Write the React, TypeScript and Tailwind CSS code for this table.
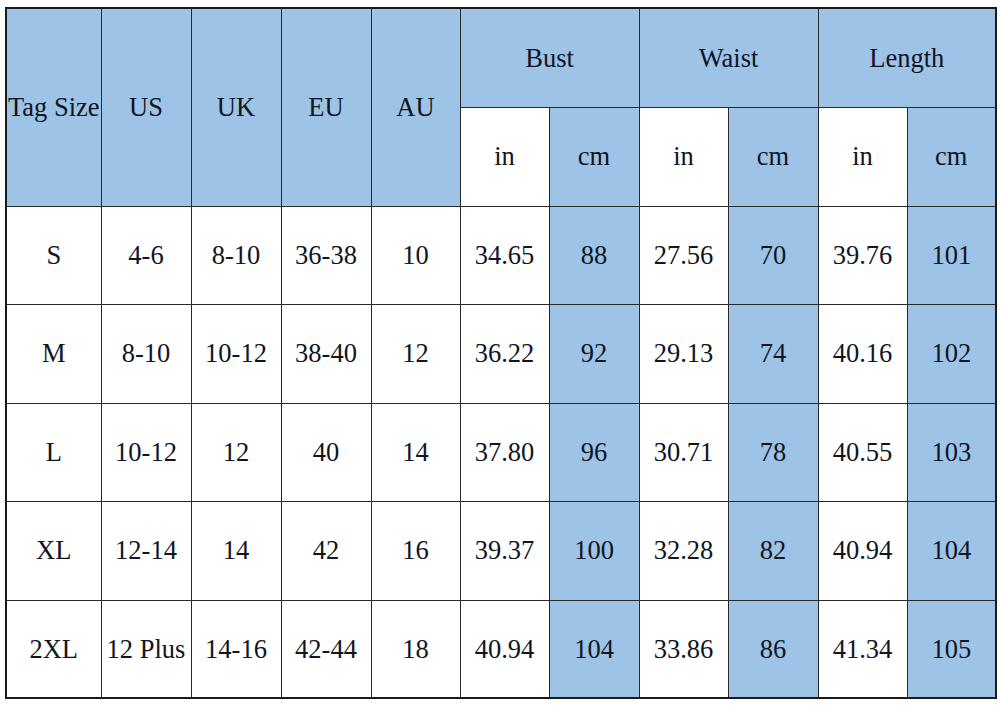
import React from "react";

const widths = [95, 90, 90, 90, 89, 89, 90, 89, 90, 89, 89];
const rows = [
  ["S", "4-6", "8-10", "36-38", "10", "34.65", "88", "27.56", "70", "39.76", "101"],
  ["M", "8-10", "10-12", "38-40", "12", "36.22", "92", "29.13", "74", "40.16", "102"],
  ["L", "10-12", "12", "40", "14", "37.80", "96", "30.71", "78", "40.55", "103"],
  ["XL", "12-14", "14", "42", "16", "39.37", "100", "32.28", "82", "40.94", "104"],
  ["2XL", "12 Plus", "14-16", "42-44", "18", "40.94", "104", "33.86", "86", "41.34", "105"],
];
const rowH = [98, 99, 98, 99, 98];

export default function App() {
  const blue = "bg-[#9dc3e6]";
  const cell = "border border-[#2a2a2a] text-center align-middle p-0";
  return (
    <div
      className="w-[1000px] h-[705px] bg-white pl-[5px] pt-[7px] text-[#10151f] text-[26.5px] leading-none"
      style={{ fontFamily: '"Liberation Serif", "Times New Roman", serif' }}
    >
      <table className="table-fixed border-collapse border-2 border-[#1a1a1a] w-[990px]">
        <colgroup>
          {widths.map((w, i) => (
            <col key={i} style={{ width: w }} />
          ))}
        </colgroup>
        <tbody>
          <tr className="h-[99px]">
            {["Tag Size", "US", "UK", "EU", "AU"].map((t) => (
              <td key={t} rowSpan={2} className={`${cell} ${blue} whitespace-nowrap`}>
                {t}
              </td>
            ))}
            {["Bust", "Waist", "Length"].map((t) => (
              <td key={t} colSpan={2} className={`${cell} ${blue}`}>
                {t}
              </td>
            ))}
          </tr>
          <tr className="h-[99px]">
            {[0, 1, 2].map((i) => (
              <React.Fragment key={i}>
                <td className={`${cell} bg-white`}>in</td>
                <td className={`${cell} ${blue}`}>cm</td>
              </React.Fragment>
            ))}
          </tr>
          {rows.map((r, ri) => (
            <tr key={ri} style={{ height: rowH[ri] }}>
              {r.map((v, ci) => (
                <td
                  key={ci}
                  className={`${cell} whitespace-nowrap ${ci === 6 || ci === 8 || ci === 10 ? blue : "bg-white"}`}
                >
                  {v}
                </td>
              ))}
            </tr>
          ))}
        </tbody>
      </table>
    </div>
  );
}
